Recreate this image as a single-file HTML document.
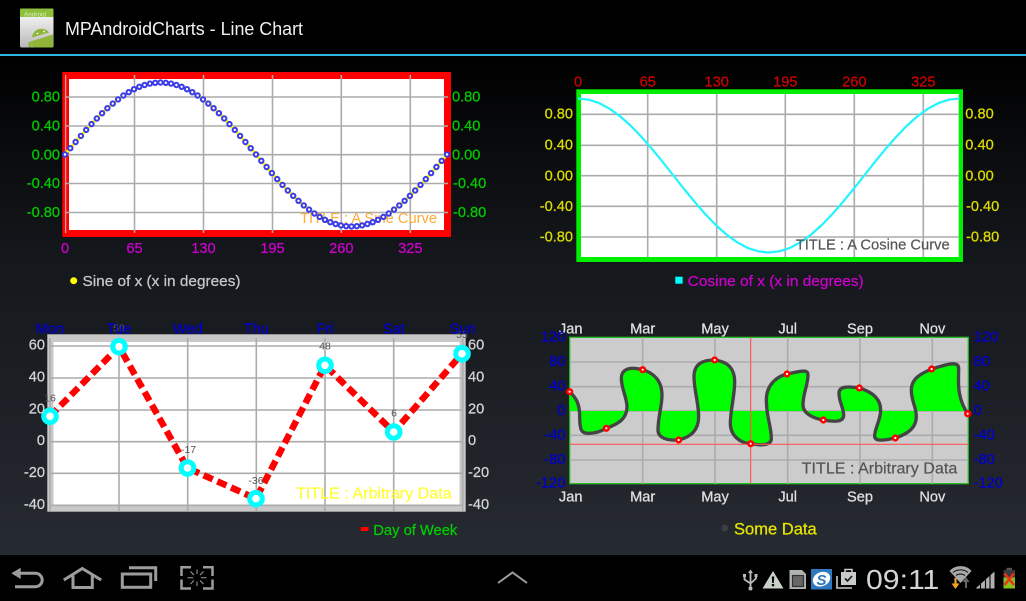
<!DOCTYPE html>
<html><head><meta charset="utf-8"><title>MPAndroidCharts - Line Chart</title>
<style>
html,body{margin:0;padding:0;width:1026px;height:601px;overflow:hidden;background:#000}
svg{display:block;position:absolute;left:0;top:0}
text{font-family:"Liberation Sans",Arial,sans-serif}
.ax{font-size:14.6px;stroke-width:.25px}
.g{stroke:#ababab;stroke-width:1.6;fill:none}
.v{font-size:10.5px;fill:#555;text-anchor:middle}
.m{text-anchor:middle}
.e{text-anchor:end}
</style></head><body>
<svg width="1026" height="601" viewBox="0 0 1026 601" xmlns="http://www.w3.org/2000/svg">
<defs>
<linearGradient id="bg" x1="0" y1="0" x2="0" y2="1"><stop offset="0" stop-color="#000"/><stop offset="0.4" stop-color="#14171b"/><stop offset="1" stop-color="#262a31"/></linearGradient>
<linearGradient id="ic" x1="0" y1="0" x2="0" y2="1"><stop offset="0" stop-color="#fff"/><stop offset="1" stop-color="#b8b8b8"/></linearGradient>
<marker id="d" markerUnits="userSpaceOnUse" markerWidth="9" markerHeight="9" refX="4.500" refY="4.500"><circle cx="4.500" cy="4.500" r="2.200" fill="#fff" stroke="#3c3ce8" stroke-width="2"/></marker>
</defs>
<rect width="1026" height="601" fill="#000"/>
<rect y="56" width="1026" height="499" fill="url(#bg)"/>
<rect y="54" width="1026" height="2" fill="#33b5e5"/>

<!-- app icon -->
<rect x="20" y="8.500" width="33.500" height="39" rx="1.500" fill="url(#ic)"/>
<path d="M20 17V10a1.500 1.500 0 0 1 1.500-1.500h30.500a1.500 1.500 0 0 1 1.500 1.500v7z" fill="#8cbf3a"/>
<text x="24" y="16.500" font-size="6" fill="#dfeec4" textLength="22" lengthAdjust="spacingAndGlyphs">Android</text>
<path d="M32 37.500a9.500 9.500 0 0 1 17-5z" fill="#8fb63a"/>
<path d="M30.500 41.500L53 34.500V47.500H33z" fill="#8fb63a"/>
<path d="M30 47.500V42" stroke="#8fb63a" stroke-width="3"/>
<path d="M50 27.500l3-1.500v7l-3 1z" fill="#ddd"/>
<circle cx="37.500" cy="33.500" r=".9" fill="#fff"/><circle cx="44" cy="31.500" r=".9" fill="#fff"/>
<text x="65" y="35" font-size="18" fill="#f0f0f0" textLength="238" lengthAdjust="spacingAndGlyphs">MPAndroidCharts - Line Chart</text>

<!-- CHART 1 -->
<rect x="62.300" y="72" width="388.700" height="165" fill="#f00"/>
<rect x="69" y="79" width="375" height="151" fill="#fff"/>
<path class="g" d="M65 97H448M65 126H448M65 154.700H448M65 183.500H448M65 212.500H448M134.500 75V233M203.500 75V233M272.500 75V233M341.300 75V233M410.300 75V233"/>
<path stroke="#d8a0a0" stroke-width="1.300" d="M65.600 75V233" fill="none"/>
<text x="300" y="223" font-size="15" fill="#ffaa33" textLength="137" lengthAdjust="spacingAndGlyphs">TITLE : A Sine Curve</text>
<polyline fill="none" stroke="#ffff00" stroke-width="3" marker-start="url(#d)" marker-mid="url(#d)" marker-end="url(#d)" points="65,154.500 70.300,148.200 75.600,142 80.900,135.900 86.200,129.900 91.500,124.100 96.800,118.500 102.100,113.200 107.400,108.200 112.800,103.600 118.100,99.400 123.400,95.500 128.700,92.200 134,89.200 139.300,86.800 144.600,85 149.900,83.600 155.200,82.800 160.500,82.500 165.800,82.800 171.100,83.600 176.400,85 181.700,86.800 187,89.200 192.300,92.200 197.600,95.500 203,99.400 208.300,103.600 213.600,108.200 218.900,113.200 224.200,118.500 229.500,124.100 234.800,129.900 240.100,135.900 245.400,142 250.700,148.200 256,154.500 261.300,160.800 266.600,167 271.900,173.100 277.200,179.100 282.500,184.900 287.800,190.500 293.200,195.800 298.500,200.800 303.800,205.400 309.100,209.600 314.400,213.500 319.700,216.900 325,219.800 330.300,222.200 335.600,224 340.900,225.400 346.200,226.200 351.500,226.500 356.800,226.200 362.100,225.400 367.400,224 372.700,222.200 378,219.800 383.400,216.900 388.700,213.500 394,209.600 399.300,205.400 404.600,200.800 409.900,195.800 415.200,190.500 420.500,184.900 425.800,179.100 431.100,173.100 436.400,167 441.700,160.800 447,154.500"/>
<g class="ax e" fill="#00cc00" stroke="#00cc00"><text x="60" y="101.500">0.80</text><text x="60" y="130.500">0.40</text><text x="60" y="159.500">0.00</text><text x="60" y="188">-0.40</text><text x="60" y="217">-0.80</text></g>
<g class="ax" fill="#00cc00" stroke="#00cc00"><text x="452" y="101.500">0.80</text><text x="452" y="130.500">0.40</text><text x="452" y="159.500">0.00</text><text x="453" y="188">-0.40</text><text x="453" y="217">-0.80</text></g>
<g class="ax m" fill="#cc00cc" stroke="#cc00cc"><text x="65" y="253">0</text><text x="134.500" y="253">65</text><text x="203.500" y="253">130</text><text x="272.500" y="253">195</text><text x="341.300" y="253">260</text><text x="410.300" y="253">325</text></g>
<circle cx="73.700" cy="280.700" r="3.500" fill="#ffff00"/>
<text x="82.500" y="286" font-size="15" fill="#c8c8c8" stroke="#c8c8c8" stroke-width=".25" textLength="158" lengthAdjust="spacingAndGlyphs">Sine of x (x in degrees)</text>

<!-- CHART 2 -->
<rect x="576.300" y="89.300" width="386.700" height="172.700" fill="#00ee00"/>
<rect x="581" y="94" width="377.700" height="163" fill="#fff"/>
<path class="g" d="M581 114.300H959M581 145.300H959M581 175.700H959M581 206.300H959M581 237H959M647.700 94V257M716.700 94V257M785.300 94V257M854.300 94V257M923.300 94V257"/>
<polyline fill="none" stroke="#22f4ff" stroke-width="2.200" stroke-linejoin="round" points="578,98.500 588.600,99.700 599.200,103.100 609.800,108.800 620.400,116.500 631,126 641.600,137 652.200,149.200 662.800,162.100 673.400,175.500 684,188.900 694.600,201.800 705.200,214 715.800,225 726.400,234.500 737,242.200 747.600,247.900 758.200,251.300 768.800,252.500 779.400,251.300 790,247.900 800.600,242.200 811.200,234.500 821.800,225 832.400,214 843,201.800 853.600,188.900 864.200,175.500 874.800,162.100 885.400,149.200 896,137 906.600,126 917.200,116.500 927.800,108.800 938.400,103.100 949,99.700 959.600,98.500"/>
<text x="795.700" y="249.300" font-size="15" fill="#555" stroke="#555" stroke-width=".2" textLength="154" lengthAdjust="spacingAndGlyphs">TITLE : A Cosine Curve</text>
<g class="ax m" fill="#cc0000" stroke="#cc0000"><text x="578" y="86.700">0</text><text x="647.700" y="86.700">65</text><text x="716.700" y="86.700">130</text><text x="785.300" y="86.700">195</text><text x="854.300" y="86.700">260</text><text x="923.300" y="86.700">325</text></g>
<g class="ax e" fill="#dddd00" stroke="#dddd00"><text x="573" y="118.500">0.80</text><text x="573" y="149.300">0.40</text><text x="573" y="180.300">0.00</text><text x="573" y="211">-0.40</text><text x="573" y="241.700">-0.80</text></g>
<g class="ax" fill="#dddd00" stroke="#dddd00"><text x="965.300" y="118.500">0.80</text><text x="965.300" y="149.300">0.40</text><text x="965.300" y="180.300">0.00</text><text x="966" y="211">-0.40</text><text x="966" y="241.700">-0.80</text></g>
<rect x="675.300" y="276.700" width="7.300" height="7" fill="#00ffff"/>
<text x="687.700" y="286" font-size="15" fill="#cc00cc" stroke="#cc00cc" stroke-width=".25" textLength="176" lengthAdjust="spacingAndGlyphs">Cosine of x (x in degrees)</text>

<!-- CHART 3 -->
<rect x="47.300" y="334.300" width="418.400" height="177.400" fill="#c8c8c8"/>
<rect x="53.500" y="342" width="406" height="162.500" fill="#fff"/>
<path class="g" d="M50 346H463M50 378H463M50 410H463M50 441.700H463M50 473.300H463M50 505.300H463M50 338V511M119 338V511M187.700 338V511M256.300 338V511M325 338V511M393.700 338V511M462.700 338V511"/>
<polyline fill="none" stroke="#ff0000" stroke-width="6.500" stroke-dasharray="10 5" points="50,416.300 119,346.700 187.500,468 256,498.700 325,365.300 393.700,432 462,353.700"/>
<g fill="#fff" stroke="#00ffff" stroke-width="5"><circle cx="50" cy="416.300" r="6.300"/><circle cx="119" cy="346.700" r="6.300"/><circle cx="187.500" cy="468" r="6.300"/><circle cx="256" cy="498.700" r="6.300"/><circle cx="325" cy="365.300" r="6.300"/><circle cx="393.700" cy="432" r="6.300"/><circle cx="462" cy="353.700" r="6.300"/></g>
<text class="v" x="50" y="401.700">16</text><text class="v" x="119" y="331.700">59</text><text class="v" x="188.500" y="453">-17</text><text class="v" x="256" y="484">-36</text><text class="v" x="325" y="349.300">48</text><text class="v" x="394" y="416.700">6</text><text class="v" x="462" y="338">55</text>
<text x="296" y="498.300" font-size="15.500" fill="#ffff33" stroke="#ffff33" stroke-width=".2" textLength="155.700" lengthAdjust="spacingAndGlyphs">TITLE : Arbitrary Data</text>
<g class="ax m" fill="#0000cc" stroke="#0000cc"><text x="50" y="333.300">Mon</text><text x="119" y="333.300">Tue</text><text x="187.700" y="333.300">Wed</text><text x="256.300" y="333.300">Thu</text><text x="325" y="333.300">Fri</text><text x="393.700" y="333.300">Sat</text><text x="462.700" y="333.300">Sun</text></g>
<g class="ax e" fill="#d4d4d4" stroke="#d4d4d4"><text x="45" y="349.300">60</text><text x="45" y="381.700">40</text><text x="45" y="413.700">20</text><text x="45" y="445">0</text><text x="45" y="477">-20</text><text x="45" y="509">-40</text></g>
<g class="ax" fill="#d4d4d4" stroke="#d4d4d4"><text x="468" y="349.300">60</text><text x="468" y="381.700">40</text><text x="468" y="413.700">20</text><text x="468" y="445">0</text><text x="468" y="477">-20</text><text x="468" y="509">-40</text></g>
<rect x="360.700" y="527" width="7.800" height="4" fill="#ff0000"/>
<text x="373.300" y="535" font-size="15" fill="#00cc00" stroke="#00cc00" stroke-width=".25" textLength="84" lengthAdjust="spacingAndGlyphs">Day of Week</text>

<!-- CHART 4 -->
<rect x="569.700" y="337.300" width="398.600" height="146.400" fill="#cccccc" stroke="#22bb22" stroke-width="1.300"/>
<path class="g" d="M570 362H968M570 386.700H968M570 411H968M570 435.300H968M570 460H968M642.700 337V484M715 337V484M787.700 337V484M860 337V484M932.300 337V484"/>
<g transform="translate(513,310) scale(.33333)">
<path fill="#00ff00" d="M170 245C190 265 200 280 200 320C200 360 205 370 225 370C250 370 265 363 280 355C320 340 342 325 342 290C342 265 325 235 325 205C325 180 345 175 360 175C372 175 380 177 389 179C425 190 447 215 447 255C447 290 435 320 435 360C435 385 465 392 497 390C535 380 557 360 557 320C557 280 543 240 543 200C543 160 570 150 605 150C645 155 665 175 665 215C665 260 652 300 652 340C652 375 680 400 713 401C750 408 775 405 775 385C775 350 760 320 760 270C760 225 790 200 822 192C860 185 885 175 885 195C885 225 870 250 870 285C870 310 900 325 931 330C970 337 992 335 992 315C992 295 978 275 978 250C978 230 1000 228 1039 234C1075 245 1103 265 1103 300C1103 330 1085 355 1085 378C1085 395 1110 392 1147 384C1190 370 1210 350 1210 320C1210 290 1195 275 1195 240C1195 205 1225 190 1256 177C1295 165 1337 150 1337 175C1337 215 1330 260 1364 311L1364 303L170 303Z"/>
<path fill="none" stroke="#444" stroke-width="10" stroke-linejoin="round" d="M170 245C190 265 200 280 200 320C200 360 205 370 225 370C250 370 265 363 280 355C320 340 342 325 342 290C342 265 325 235 325 205C325 180 345 175 360 175C372 175 380 177 389 179C425 190 447 215 447 255C447 290 435 320 435 360C435 385 465 392 497 390C535 380 557 360 557 320C557 280 543 240 543 200C543 160 570 150 605 150C645 155 665 175 665 215C665 260 652 300 652 340C652 375 680 400 713 401C750 408 775 405 775 385C775 350 760 320 760 270C760 225 790 200 822 192C860 185 885 175 885 195C885 225 870 250 870 285C870 310 900 325 931 330C970 337 992 335 992 315C992 295 978 275 978 250C978 230 1000 228 1039 234C1075 245 1103 265 1103 300C1103 330 1085 355 1085 378C1085 395 1110 392 1147 384C1190 370 1210 350 1210 320C1210 290 1195 275 1195 240C1195 205 1225 190 1256 177C1295 165 1337 150 1337 175C1337 215 1330 260 1364 311"/>
<path stroke="#f55" stroke-width="3.500" fill="none" d="M171 403H1365M713 84V520"/>
<g fill="#fff" stroke="#ff0000" stroke-width="7.500"><circle cx="170" cy="245" r="7"/><circle cx="280" cy="355" r="7"/><circle cx="389" cy="179" r="7"/><circle cx="497" cy="390" r="7"/><circle cx="605" cy="150" r="7"/><circle cx="713" cy="401" r="7"/><circle cx="822" cy="192" r="7"/><circle cx="931" cy="330" r="7"/><circle cx="1039" cy="234" r="7"/><circle cx="1147" cy="384" r="7"/><circle cx="1256" cy="177" r="7"/><circle cx="1364" cy="311" r="7"/></g>
</g>
<text x="801.700" y="473.300" font-size="15.500" fill="#555" stroke="#555" stroke-width=".2" textLength="155.600" lengthAdjust="spacingAndGlyphs">TITLE : Arbitrary Data</text>
<g class="ax m" fill="#e0e0e0" stroke="#e0e0e0"><text x="570.700" y="333.300">Jan</text><text x="642.700" y="333.300">Mar</text><text x="715" y="333.300">May</text><text x="787.700" y="333.300">Jul</text><text x="860" y="333.300">Sep</text><text x="932.300" y="333.300">Nov</text><text x="570.700" y="501.700">Jan</text><text x="642.700" y="501.700">Mar</text><text x="715" y="501.700">May</text><text x="787.700" y="501.700">Jul</text><text x="860" y="501.700">Sep</text><text x="932.300" y="501.700">Nov</text></g>
<g class="ax e" fill="#0000cc" stroke="#0000cc"><text x="565.300" y="341.700">120</text><text x="565.300" y="366">80</text><text x="565.300" y="390.700">40</text><text x="565.300" y="415">0</text><text x="565.300" y="439.300">-40</text><text x="565.300" y="464">-80</text><text x="565.300" y="487.700">-120</text></g>
<g class="ax" fill="#0000cc" stroke="#0000cc"><text x="973.700" y="341.700">120</text><text x="973.700" y="366">80</text><text x="973.700" y="390.700">40</text><text x="973.700" y="415">0</text><text x="973.700" y="439.300">-40</text><text x="973.700" y="464">-80</text><text x="973.700" y="487.700">-120</text></g>
<circle cx="724.700" cy="528" r="3.500" fill="#3a3d42"/>
<text x="734" y="534.300" font-size="16.500" fill="#e6e600" stroke="#e6e600" stroke-width=".25" textLength="82.700" lengthAdjust="spacingAndGlyphs">Some Data</text>

<!-- NAV BAR -->
<g fill="none" stroke="#9c9c9c" stroke-width="3">
<path d="M20 573.300H35.500a6.700 6.700 0 0 1 0 13.400H15"/>
<path d="M63.800 580L82.300 568.500L101.200 580"/>
<path d="M73 575.500V587.500H92.300V575.500"/>
<rect x="122.300" y="574" width="28.400" height="13.300"/>
<path d="M129 567.700H155.700V581"/>
<path d="M191 567.200H181.500V576M203 567.200H212.500V576M191 588.500H181.500V579.500M203 588.500H212.500V579.500" stroke-width="2.500"/>
<path d="M197 569.500V574M197 581.500V586M187.500 577.700H193M201 577.700H206.500M190.500 571.500L194 575M203.500 571.500L200 575M190.500 584L194 580.500M203.500 584L200 580.500" stroke-width="1"/>
<path d="M498 583L512.500 572.500L527 583" stroke-width="2"/>
</g>
<path d="M11.300 573.300L20.700 567.700V579z" fill="#9c9c9c"/>

<!-- STATUS -->
<g fill="none" stroke="#b8bcb8" stroke-width="1.800">
<path d="M750.500 572V589M744.500 575.500V579.500L750.500 583.500L756 578.500V575.500"/>
</g>
<path d="M748 573L750.500 569.500L753 573z M743 574h3v3h-3z M754.500 574h3v3h-3z" fill="#b8bcb8"/>
<circle cx="750.500" cy="588.500" r="2" fill="#b8bcb8"/>
<path d="M773 571L783.500 588.500H762.500z" fill="#c8d0c8"/>
<path d="M771.800 576.500h2.400l-.4 6.500h-1.600zM771.800 584h2.400v2.300h-2.400z" fill="#000"/>
<path d="M789.500 570H802L806 574V589H789.500z" fill="#b0b4b0"/>
<rect x="792.500" y="575.500" width="11" height="11" fill="#666" stroke="#333" stroke-width="1.200"/>
<rect x="811" y="569" width="21" height="20.500" fill="#2e78bd"/>
<ellipse cx="821.500" cy="579.200" rx="9" ry="7" fill="#fff" transform="rotate(-25 821.500 579.200)"/>
<text x="821.500" y="585" font-size="15" font-weight="bold" font-style="italic" fill="#2e78bd" text-anchor="middle">S</text>
<rect x="841" y="572" width="15" height="13" fill="#c8ccc8"/>
<path d="M845 572v-2.500h7V572" fill="none" stroke="#c8ccc8" stroke-width="1.500"/>
<path d="M845 578.500l2.500 2.500 4.500-5" fill="none" stroke="#111" stroke-width="1.600"/>
<path d="M837 576v12h15" fill="none" stroke="#c8ccc8" stroke-width="1.600"/>
<text x="866" y="589" font-size="28" fill="#d4d4d4" textLength="73.300" lengthAdjust="spacingAndGlyphs">09:11</text>
<path d="M949.500 571C955 564.500 966.500 564.500 971.500 571L960.500 583z" fill="#a8a8a8"/>
<path d="M953 572.500C957 569 964 569 968 572.500M956 575.500C958.500 573.500 962.500 573.500 965 575.500" stroke="#111" stroke-width="1" fill="none"/>
<path d="M955.500 578v7" stroke="#f5a020" stroke-width="2.200" fill="none"/><path d="M951.500 583.500H959.500L955.500 589z" fill="#f5a020"/>
<path d="M966 577L962.500 582H965V588H967V582H969.500z" fill="#666"/>
<path d="M975.500 588.500L994.500 571.500V588.500z" fill="#b0b0b0"/>
<path d="M980.500 588.500V584M985.500 588.500V579.500M990 588.500V575" stroke="#000" stroke-width="1.100" fill="none"/>
<rect x="1006.500" y="567.800" width="5.500" height="2.500" fill="#555"/>
<rect x="1003.500" y="570" width="11.500" height="18.500" fill="#3c3c3c"/>
<rect x="1003.500" y="577.500" width="11.500" height="11" fill="#84c020"/>
<path d="M1004.500 573.500L1014 585M1014 573.500L1004.500 585" stroke="#f03018" stroke-width="2.400" fill="none"/>
</svg>
</body></html>
